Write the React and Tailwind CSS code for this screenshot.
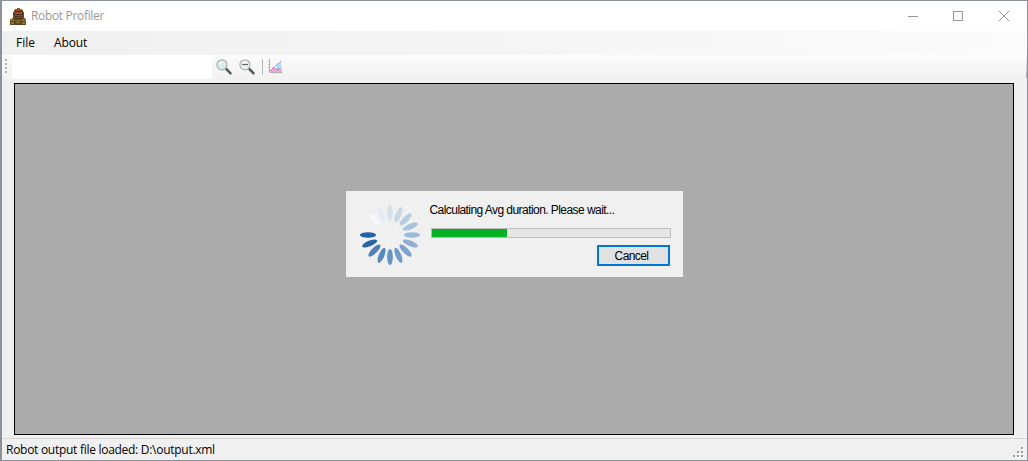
import React from "react";

const petals = [
  [0, "#d3e0ee"], [22.5, "#c6d7e8"], [45, "#b8cde2"], [67.5, "#aac3dd"],
  [90, "#9dbad8"], [112.5, "#8fb0d2"], [135, "#7ba2ca"], [157.5, "#729cc7"],
  [180, "#6592c1"], [202.5, "#5a8abc"], [225, "#4e81b7"], [247.5, "#2466a8"],
  [270, "#2063a6"], [315, "#f4f8fc"], [337.5, "#e3ebf4"],
];

function RobotIcon() {
  return (
    <svg width="17" height="17" viewBox="0 0 17 17" shapeRendering="crispEdges">
      <path d="M6 1h5v1h2v2h1v6h1v1h1v6H0v-6h2v-1h1V4h1V2h2z" fill="#68441f" />
      <path d="M7 0h3v1h2v2H5V1h2z" fill="#98512b" />
      <path d="M5 3h8v1H5z" fill="#4c2a18" />
      <path d="M5 4h7v2H5z" fill="#9d4f2e" />
      <path d="M4 6h9v1H4zM5 8h3v1H5zM9 8h3v1H9zM5 10h7v1H5z" fill="#44301c" />
      <path d="M5 7h7v1H5zM6 9h5v1H6z" fill="#80522c" />
      <path d="M0 11h4v2H0zM5 12h6v1H5zM12 11h4v2h-4z" fill="#8b7335" />
      <path d="M1 14h3v2H1zM6 14h4v1H6zM12 14h3v2h-3z" fill="#8a7638" />
      <path d="M4 12h1v5H4zM11 12h1v5h-1zM6 16h4v1H6zM0 13h2v1H0z" fill="#54431f" />
    </svg>
  );
}

function Magnifier({ minus }) {
  return (
    <svg width="17" height="17" viewBox="0 0 17 17">
      <path d="M9.5 9.5l5 5" stroke="#b5b5b5" strokeWidth="3" strokeLinecap="round" />
      <path d="M10.5 10l4 4.2" stroke="#4a4a4a" strokeWidth="1.9" strokeLinecap="round" />
      <circle cx="5.9" cy="5.8" r="5" fill={minus ? "#edf1f1" : "#d9eceb"} stroke="#aab0ae" strokeWidth="1.2" />
      <path d="M3 5Q4 2.8 7 2.8" fill="none" stroke="#f8ffff" strokeWidth="1.3" />
      {minus && <path d="M3 5.5h6" stroke="#666" strokeWidth="1.2" />}
    </svg>
  );
}

function ChartIcon() {
  return (
    <svg width="16" height="16" viewBox="0 0 16 16">
      <path d="M2 13V12l4-4 3 3h5v2z" fill="#f2a5df" />
      <path d="M2 12l4-4 3 3 4-1" fill="none" stroke="#e56abf" />
      <path d="M7.500 6.500L10 4h1l2-2v6l-1.500 2.500Q8 9 7.500 6.500z" fill="#b5d8fa" />
      <path d="M7.500 7l2.500-2.500h1l2-2.500M9 9.500l3 .5 1-2" fill="none" stroke="#7fa5dc" strokeWidth=".8" />
      <path d="M1.500 0v13.500H14" fill="none" stroke="#b4b4b4" />
      <path d="M0 2.500h1M0 5.500h1M0 8.500h1M0 11.500h1M4.500 14v1M7.500 14v1M10.500 14v1M13.500 14v1" stroke="#c5c5c5" />
    </svg>
  );
}

function Spinner() {
  return (
    <svg width="62" height="62" viewBox="-31 -31 62 62">
      {petals.map(([angle, color]) => (
        <ellipse key={angle} cx="0" cy="-22" rx="2.8" ry="8.1" fill={color} transform={`rotate(${angle})`} />
      ))}
    </svg>
  );
}

function ProgressDialog() {
  return (
    <section className="flex h-[86px] w-[337px] bg-[#f0f0f0] pt-[13px] pl-[13px]">
      <Spinner />
      <div className="ml-[9px] flex w-[241px] flex-col">
        <div className="-mt-[2px] h-[16px] whitespace-nowrap font-['Liberation_Sans',sans-serif] text-[12px] leading-[16px] tracking-[-0.56px]">
          Calculating Avg duration. Please wait...
        </div>
        <div className="mt-[10px] ml-px h-[10px] w-[240px] border border-[#bcbcbc] bg-[#e6e6e6]">
          <div className="h-full w-[75px] bg-[#06b025]" />
        </div>
        <button className="mt-[7px] mr-px h-[21px] w-[73px] self-end border-2 border-[#0078d7] bg-[#e1e1e1] pt-px pr-[3px] font-['Liberation_Sans',sans-serif] text-[12px] leading-[16px] tracking-[-0.6px]">
          Cancel
        </button>
      </div>
    </section>
  );
}

export default function App() {
  return (
    <div className="flex h-[461px] w-[1028px] flex-col overflow-hidden border-t border-r border-b border-l-2 border-[#8d919c] bg-[#f0f0f0] font-['Open_Sans','Noto_Sans',sans-serif] text-[12px] text-black">
      <header className="flex h-[30px] shrink-0 items-center bg-white pl-[8px]">
        <RobotIcon />
        <span className="ml-[4px] text-[#999] tracking-[-0.33px]">Robot Profiler</span>
        <svg className="ml-auto mr-[16px]" width="104" height="12" viewBox="0 0 104 12" fill="none" stroke="#999">
          <path d="M1 6.500h10M46.500 1.500h9v9h-9z" shapeRendering="crispEdges" />
          <path d="M92 1l10 10M102 1l-10 10" />
        </svg>
      </header>
      <nav className="flex h-[24px] shrink-0 items-center bg-linear-to-r from-[#f0f0f0] to-[#fbfbfb] pl-[14px]">
        <span className="w-[38px]">File</span>
        <span className="tracking-[-0.1px]">About</span>
      </nav>
      <div className="flex h-[28px] shrink-0 bg-linear-to-b from-[#fcfcfc] to-[#f0f0f0]">
        <div className="flex w-[10px] flex-col gap-[2px] pt-[4px] pl-[3px]">
          <i className="size-[2px] bg-[#b2b2b2]" />
          <i className="size-[2px] bg-[#b2b2b2]" />
          <i className="size-[2px] bg-[#b2b2b2]" />
          <i className="size-[2px] bg-[#b2b2b2]" />
        </div>
        <div className="h-[24px] w-[200px] bg-white" />
        <div className="flex h-[24px] items-center pl-[4px]">
          <Magnifier />
          <div className="ml-[6px]"><Magnifier minus /></div>
          <div className="ml-[6px] h-[16px] w-px bg-[#b9b9b9]" />
          <div className="ml-[5px]"><ChartIcon /></div>
        </div>
        <div className="ml-auto h-[23px] w-px bg-linear-to-b from-[#f5f5f5] to-[#b0b0b3]" />
      </div>
      <main className="ml-[12px] flex h-[352px] w-[1000px] shrink-0 justify-center border border-black bg-[#ababab] pt-[107px]">
        <ProgressDialog />
      </main>
      <footer className="mt-[3px] flex h-[22px] shrink-0 items-center justify-between border-t border-[#d7d7d7] pr-[2px] pl-[4px]">
        <span className="tracking-[-0.28px]">Robot output file loaded: D:\output.xml</span>
        <svg width="12" height="12" viewBox="0 0 12 12" className="mt-[5px]" shapeRendering="crispEdges">
          <path d="M9 2h2v2H9zM5 6h2v2H5zM9 6h2v2H9zM1 10h2v2H1zM5 10h2v2H5zM9 10h2v2H9z" fill="#fff" />
          <path d="M8 1h2v2H8zM4 5h2v2H4zM8 5h2v2H8zM0 9h2v2H0zM4 9h2v2H4zM8 9h2v2H8z" fill="#a0a0a0" />
        </svg>
      </footer>
    </div>
  );
}
